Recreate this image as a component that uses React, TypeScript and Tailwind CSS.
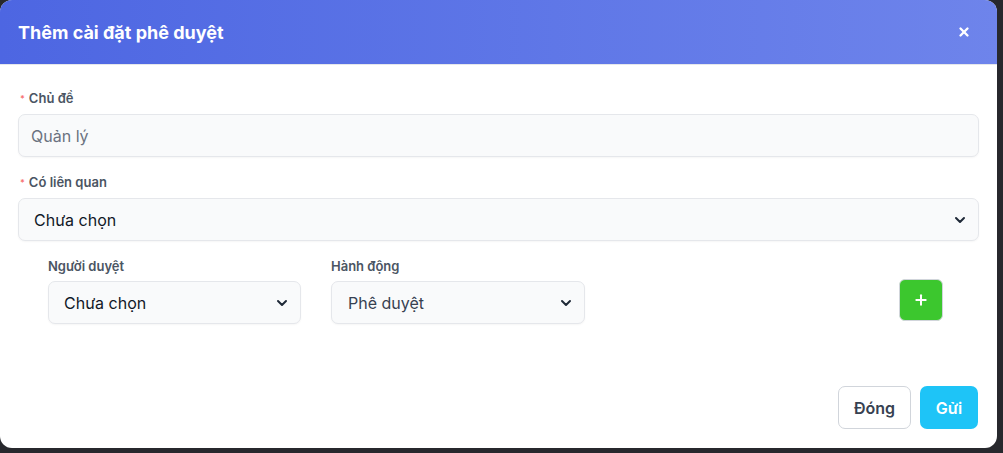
import { ChevronDown, Plus, X } from "lucide-react";

function Label({ text, required }: { text: string; required?: boolean }) {
  return (
    <div className="flex items-center h-[18px] text-[13px] font-semibold text-[#4b5563]">
      {required && <span className="text-[#f87171] text-[9px] mr-[4px] ml-[2px]">*</span>}
      {text}
    </div>
  );
}

function SelectBox({ value, className, textClass }: { value: string; className: string; textClass: string }) {
  return (
    <div
      className={`flex items-center justify-between h-[43px] rounded-[7px] border border-[#e5e7eb] bg-[#f9fafb] shadow-[0_1px_2px_rgba(0,0,0,0.04)] ${className}`}
    >
      <span className={textClass}>{value}</span>
      <ChevronDown className="w-[16px] h-[16px] text-[#1f2937] mr-[10px]" strokeWidth={3} />
    </div>
  );
}

export default function App() {
  return (
    <div className="w-[1003px] h-[453px] bg-[#27282d] font-['Inter',sans-serif]">
      <div className="w-[997px] h-[448px] rounded-[12px] bg-white overflow-hidden flex flex-col">
        <div className="h-[65px] shrink-0 flex items-center justify-between pl-[18px] pr-[26px] bg-gradient-to-r from-[#4d66e2] to-[#6e84eb] border-b border-[#e5e7eb]">
          <h1 className="text-[18px] font-bold text-white">Thêm cài đặt phê duyệt</h1>
          <X className="w-[14px] h-[14px] text-white" strokeWidth={4} />
        </div>

        <div className="flex-1 flex flex-col px-[18px] pt-[25px]">
          <Label text="Chủ đề" required />
          <div className="mt-[6px] h-[43px] rounded-[7px] border border-[#e5e7eb] bg-[#f9fafb] shadow-[0_1px_2px_rgba(0,0,0,0.04)] flex items-center px-[12px] text-[16px] text-[#6b7280]">
            Quản lý
          </div>

          <div className="mt-[17px]">
            <Label text="Có liên quan" required />
          </div>
          <SelectBox
            value="Chưa chọn"
            className="mt-[6px] w-full"
            textClass="pl-[15px] text-[16px] text-[#111827]"
          />

          <div className="flex items-start pl-[30px] mt-[17px]">
            <div className="w-[253px] flex flex-col">
              <div className="h-[18px] flex items-center text-[13px] font-semibold text-[#4b5563]">Người duyệt</div>
              <SelectBox value="Chưa chọn" className="mt-[5px]" textClass="pl-[15px] text-[16px] text-[#111827]" />
            </div>
            <div className="w-[254px] ml-[30px] flex flex-col">
              <div className="h-[18px] flex items-center text-[13px] font-semibold text-[#4b5563]">Hành động</div>
              <SelectBox value="Phê duyệt" className="mt-[5px]" textClass="pl-[16px] text-[16px] text-[#374151]" />
            </div>
            <button className="ml-[314px] mt-[21px] w-[44px] h-[42px] rounded-[6px] bg-[#3cc72e] border border-[#d1d5db] flex items-center justify-center">
              <Plus className="w-[16px] h-[16px] text-white" strokeWidth={3} />
            </button>
          </div>

          <div className="mt-auto mb-[19px] flex justify-end gap-[9px] pr-[1px]">
            <button className="w-[73px] h-[43px] rounded-[7px] border border-[#d1d5db] bg-white text-[16px] font-semibold text-[#374151]">
              Đóng
            </button>
            <button className="w-[58px] h-[43px] rounded-[7px] bg-[#1ec4f7] text-[16px] font-semibold text-white">
              Gửi
            </button>
          </div>
        </div>
      </div>
    </div>
  );
}
